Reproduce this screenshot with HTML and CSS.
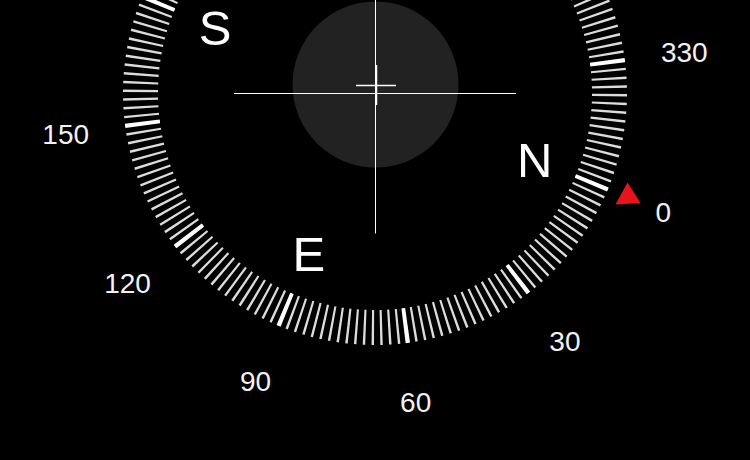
FILE: index.html
```html
<!DOCTYPE html>
<html>
<head>
<meta charset="utf-8">
<link rel="stylesheet" href="styles.css">
</head>
<body>
<main class="stage">
  <svg class="dial" width="750" height="460" viewBox="0 0 750 460" xmlns="http://www.w3.org/2000/svg">
    <circle class="bubble" cx="375.5" cy="84.5" r="83"/>
    <g transform="rotate(22.22 375 93)">
      <circle class="ticks" cx="375" cy="93" r="234.5" pathLength="360"/>
    </g>
    <g transform="rotate(22 375 93)">
      <circle class="ticks-major" cx="375" cy="93" r="234.5" pathLength="360"/>
    </g>
    <line class="hair" x1="234" y1="93.5" x2="516" y2="93.5"/>
    <line class="hair" x1="375.5" y1="-50" x2="375.5" y2="233.5"/>
    <line class="level" x1="356" y1="85.5" x2="396" y2="85.5"/>
    <line class="level" x1="376.5" y1="65" x2="376.5" y2="105"/>

    <text class="cardinal" x="534.8" y="177">N</text>
    <text class="cardinal" x="308.8" y="270.7">E</text>
    <text class="cardinal" x="215.2" y="44.7">S</text>

    <text class="deg" x="663.2" y="222.4">0</text>
    <text class="deg" x="564.9" y="350.5">30</text>
    <text class="deg" x="415.7" y="412.3">60</text>
    <text class="deg" x="255.6" y="391.2">90</text>
    <text class="deg" x="127.5" y="292.9">120</text>
    <text class="deg" x="65.7" y="143.7">150</text>
    <text class="deg" x="684.3" y="62.3">330</text>

    <polygon class="pointer" points="627.5,182.5 615.5,204.5 640.5,203"/>
  </svg>
</main>
</body>
</html>
```

FILE: styles.css
```css
html, body {
  margin: 0;
  padding: 0;
  background: #000;
}

body {
  width: 750px;
  height: 460px;
  overflow: hidden;
}

.stage {
  display: block;
  width: 750px;
  height: 460px;
  background: #000;
}

.dial {
  display: block;
  overflow: hidden;
}

.bubble {
  fill: #222222;
}

.ticks {
  fill: none;
  stroke: #dcdcdc;
  stroke-width: 35;
  stroke-dasharray: 0.56 1.44;
}

.ticks-major {
  fill: none;
  stroke: #ffffff;
  stroke-width: 35;
  stroke-dasharray: 1 29;
}

.hair {
  stroke: #ffffff;
  stroke-width: 1;
}

.level {
  stroke: #ffffff;
  stroke-width: 1.5;
}

.cardinal {
  fill: #ffffff;
  font-family: "Liberation Sans", Arial, sans-serif;
  font-size: 49px;
  text-anchor: middle;
}

.deg {
  fill: #f2f2f2;
  font-family: "Liberation Sans", Arial, sans-serif;
  font-size: 28px;
  text-anchor: middle;
}

.pointer {
  fill: #e8141c;
}
```
